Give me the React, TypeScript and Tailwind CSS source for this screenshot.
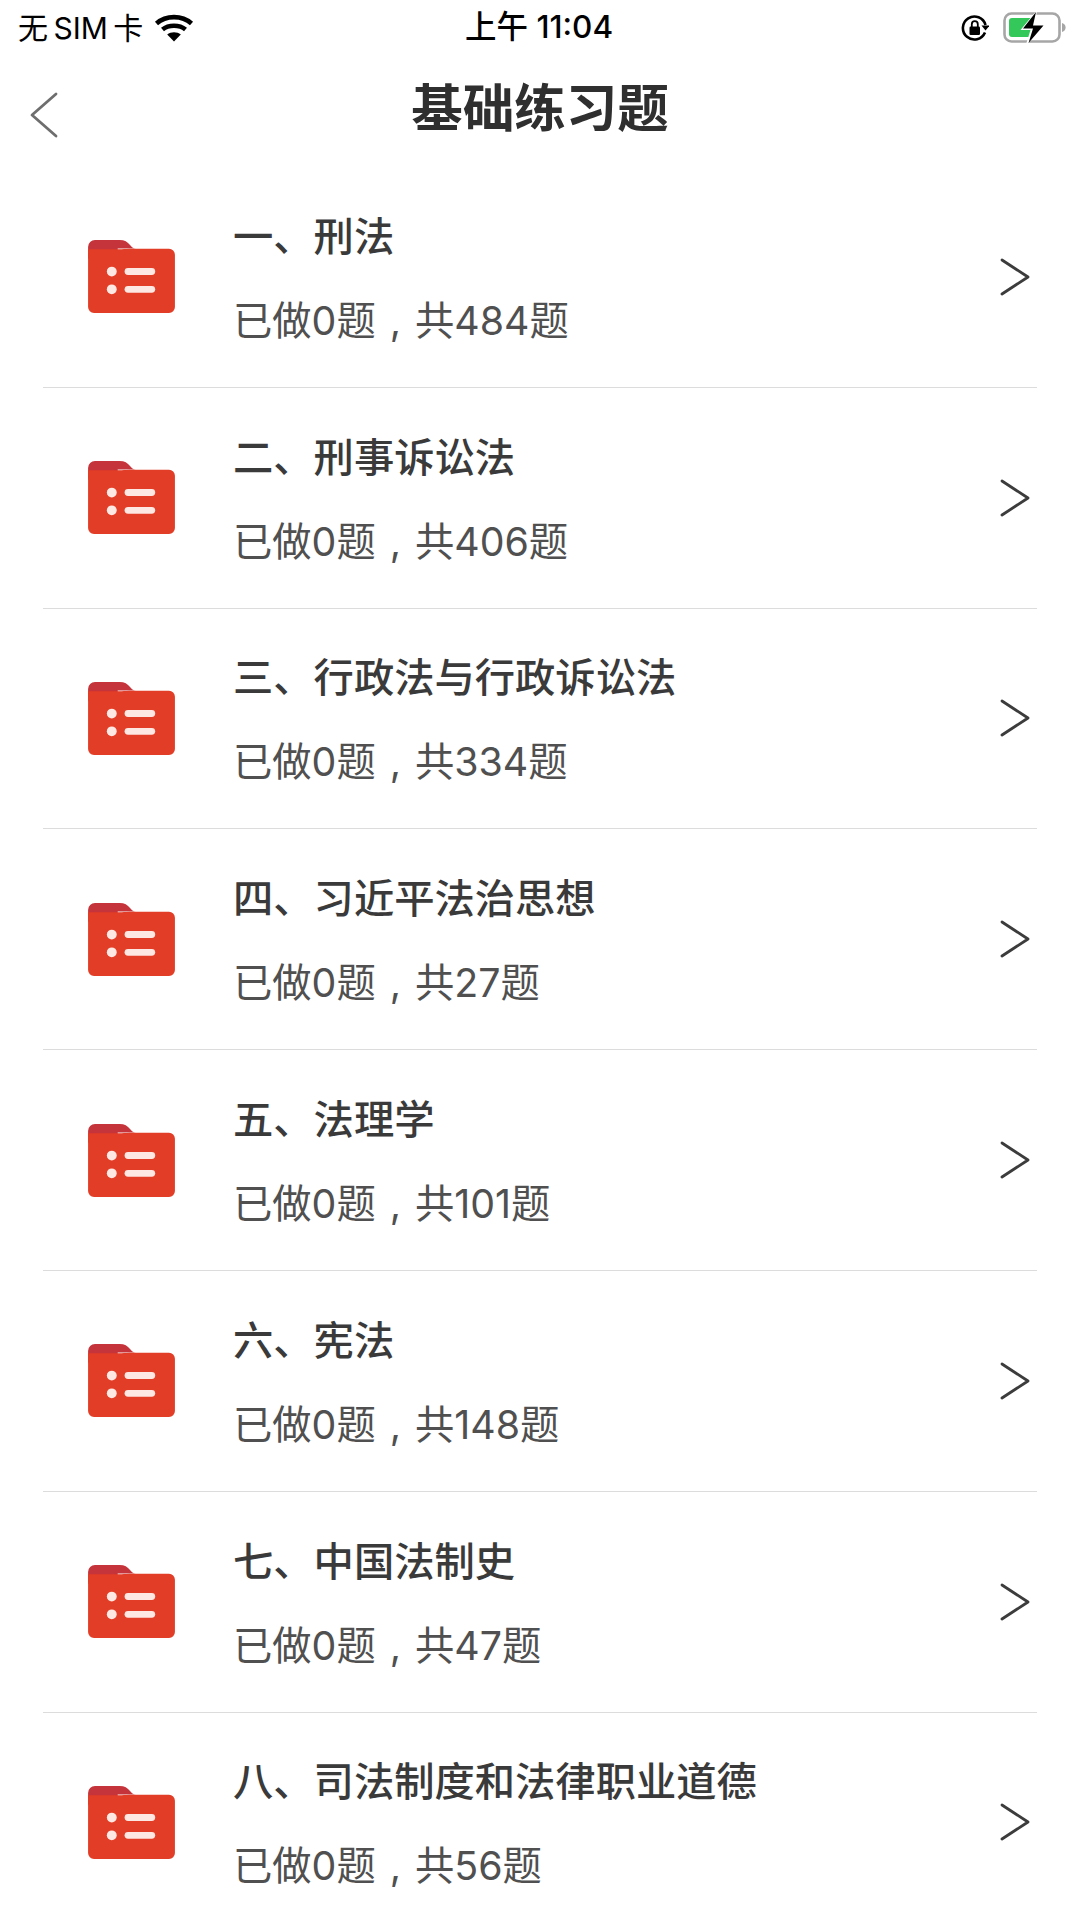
const FONT = "font-['Inter','Noto_Sans_CJK_SC',sans-serif]";

const rows = [
  { title: "一、刑法", total: 484 },
  { title: "二、刑事诉讼法", total: 406 },
  { title: "三、行政法与行政诉讼法", total: 334 },
  { title: "四、习近平法治思想", total: 27 },
  { title: "五、法理学", total: 101 },
  { title: "六、宪法", total: 148 },
  { title: "七、中国法制史", total: 47 },
  { title: "八、司法制度和法律职业道德", total: 56 },
];

function WifiIcon() {
  return (
    <svg width="40" height="30" viewBox="0 0 40 30" fill="none" stroke="#000" strokeWidth="4.6">
      <path d="M2.5 10.5C12 2 28 2 37.5 10.5" />
      <path d="M8.5 16.5C14.5 11.5 25.500 11.5 31.500 16.5" />
      <path d="M20 28.5L13.2 21.6C17 18.6 23 18.6 26.800 21.6Z" fill="#000" stroke="none" />
    </svg>
  );
}

function LockRotationIcon() {
  return (
    <svg width="28" height="28" viewBox="0 0 28 28" fill="none">
      <path d="M24 18.5A11.5 11.5 0 1 1 24.5 11" stroke="#000" strokeWidth="2.6" />
      <path d="M20.5 11.5h8L24.5 16.5z" fill="#000" />
      <rect x="8.5" y="12.5" width="10.5" height="8.5" rx="1.2" fill="#000" />
      <path d="M10.8 13V10.2a3 3 0 0 1 6 0V13" stroke="#000" strokeWidth="1.8" />
    </svg>
  );
}

function BatteryIcon() {
  return (
    <svg width="64" height="36" viewBox="0 0 64 36" fill="none">
      <rect x="1.5" y="3.5" width="55" height="28" rx="7" stroke="#a6a6a6" strokeWidth="2.6" />
      <rect x="6" y="8" width="24" height="19" rx="3" fill="#34c759" />
      <path d="M59 13c2.500.6 3.600 2.400 3.600 4.500s-1.100 3.900-3.600 4.500z" fill="#a6a6a6" />
      <path d="M34 0 17.500 20h10l-5 16L43 14H32z" fill="#fff" />
      <path d="M33 2 20 18.500h10L25.500 33 40.500 15.500H30z" fill="#000" />
    </svg>
  );
}

function FolderIcon() {
  return (
    <svg width="87" height="75" viewBox="0 0 88 76" fill="none" className="shrink-0">
      <path d="M0 8a7 7 0 0 1 7-7h25c5 0 8 2 10.500 5 1.500 2 3 3.500 6 3.500H30V20H0z" fill="#c5343a" />
      <path d="M0 16V69a6 6 0 0 0 6 6h76a6 6 0 0 0 6-6V16a6 6 0 0 0-6-6H45c-4 0-8 .3-11 .3H0z" fill="#e23d26" />
      <circle cx="24" cy="33" r="5" fill="#fde8e4" />
      <circle cx="24" cy="51" r="5" fill="#fde8e4" />
      <rect x="37" y="29.500" width="31" height="7" rx="3.500" fill="#fde8e4" />
      <rect x="37" y="47.500" width="31" height="7" rx="3.500" fill="#fde8e4" />
    </svg>
  );
}

function ChevronRight() {
  return (
    <svg width="30" height="38" viewBox="0 0 30 38" fill="none" stroke="#3c3c3c" strokeWidth="2.800" strokeLinecap="round" strokeLinejoin="round">
      <path d="M2 2 L28 19 L2 36" />
    </svg>
  );
}

function ChevronLeft() {
  return (
    <svg width="28" height="46" viewBox="0 0 28 46" fill="none" stroke="#6e6e6e" strokeWidth="2.800" strokeLinecap="round" strokeLinejoin="round">
      <path d="M26 2 L2 23 L26 44" />
    </svg>
  );
}

export default function App() {
  return (
    <div className={`${FONT} relative h-[1920px] w-[1080px] overflow-hidden bg-white`}>
      {/* status bar */}
      <div className="relative flex h-[56px] items-center justify-between pl-[18px] pr-[13px] text-black">
        <div className="flex items-center gap-[11px]">
          <span className="text-[30px] leading-none [word-spacing:-3px]">无 SIM 卡</span>
          <WifiIcon />
        </div>
        <span className="absolute left-[465px] top-[9px] text-[31.500px] font-medium leading-[36px]">上午 11:04</span>
        <div className="flex items-center gap-[14px]">
          <LockRotationIcon />
          <BatteryIcon />
        </div>
      </div>

      {/* nav */}
      <div className="relative flex h-[111px] items-center justify-center">
        <div className="absolute left-[30px] top-[36px]">
          <ChevronLeft />
        </div>
        <h1 className="pb-[6px] text-[51.500px] font-semibold leading-none text-[#2f2f2f]">基础练习题</h1>
      </div>

      {/* list */}
      <div className="flex flex-col">
        {rows.map((row) => (
          <div key={row.title} className="mx-[43px] flex h-[220.800px] items-center border-b border-[#dcdcdc] pl-[45px] pr-[7px]">
            <FolderIcon />
            <div className="ml-[58px] flex-1 pt-[4px]">
              <div className="text-[40.300px] font-medium leading-[48px] text-[#3a3a3a]">{row.title}</div>
              <div className="mt-[36px] text-[39.300px] leading-[48px] text-[#505050]">
                已做0题<span className="mx-[14px]">,</span>共{row.total}题
              </div>
            </div>
            <ChevronRight />
          </div>
        ))}
      </div>
    </div>
  );
}
